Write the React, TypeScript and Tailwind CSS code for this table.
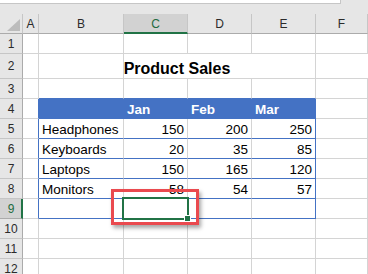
import React from "react";

type Cell = {
  text?: string;
  align?: "left" | "right";
  bold?: boolean;
  cls?: string;
};

// widths of the sheet columns (row header, A..F)
const widths = ["w-[23px]", "w-[16px]", "w-[85px]", "w-[64px]", "w-[64px]", "w-[64px]", "flex-1"];

function HeaderRow() {
  const letters = ["A", "B", "C", "D", "E", "F"];
  return (
    <div className="flex h-[20px]">
      <div className="relative w-[23px] shrink-0 border-r border-b border-r-[#c6c6c6] border-b-[#ababab] bg-[#e6e6e6]">
        {/* select-all corner */}
        <svg className="absolute right-[2px] bottom-[2px]" width="13" height="12" viewBox="0 0 13 12">
          <polygon points="13,0 13,12 0,12" fill="#bcbcbc" />
        </svg>
      </div>
      {letters.map((l, i) => {
        const selected = l === "C";
        return (
          <div
            key={l}
            className={
              widths[i + 1] +
              " flex shrink-0 items-center justify-center border-r border-b text-[12px] leading-none " +
              (selected
                ? "border-r-[#c6c6c6] border-b-[2px] border-b-[#217346] bg-[#d2d2d2] pt-[1px] text-[#1e6b41]"
                : "border-r-[#c6c6c6] border-b-[#ababab] bg-[#e6e6e6] text-[#2b2b2b]")
            }
          >
            {l}
          </div>
        );
      })}
    </div>
  );
}

function RowHead({ n, selected }: { n: number; selected?: boolean }) {
  return (
    <div
      className={
        "flex w-[23px] shrink-0 items-center justify-center border-b text-[12px] leading-none " +
        (selected
          ? "border-r-[2px] border-r-[#217346] border-b-[#ababab] bg-[#d2d2d2] pl-[1px] text-[#1e6b41]"
          : "border-r border-r-[#ababab] border-b-[#c6c6c6] bg-[#e6e6e6] text-[#2b2b2b]")
      }
    >
      {n}
    </div>
  );
}

function SheetRow({ n, cells, selected }: { n: number; cells: Cell[]; selected?: boolean }) {
  return (
    <div className="flex h-[20px]">
      <RowHead n={n} selected={selected} />
      {cells.map((c, i) => (
        <div
          key={i}
          className={
            widths[i + 1] +
            " flex shrink-0 items-end whitespace-nowrap border-r border-b border-[#d4d4d4] pb-[2px] text-[13.5px] leading-none text-black " +
            (c.align === "right" ? "justify-end pr-[3px] " : "justify-start pl-[3px] ") +
            (c.bold ? "font-bold " : "") +
            (c.cls ?? "bg-white")
          }
        >
          {c.text}
        </div>
      ))}
    </div>
  );
}

const plain: Cell[] = [{}, {}, {}, {}, {}, {}];

// table frame classes
const leftEdge = "bg-white border-r-[#4472c4]";
const hdr = "bg-[#4472c4] border-r-[#4472c4] border-b-[#4472c4] text-white";
const body = "bg-white border-b-[#4472c4]";
const bodyLast = "bg-white border-b-[#4472c4] border-r-[#4472c4]";
const topEdge = "bg-white border-b-[#4472c4]";

function dataRow(name: string, a: string, b: string, c: string): Cell[] {
  return [
    { cls: leftEdge },
    { text: name, cls: body },
    { text: a, align: "right", cls: body },
    { text: b, align: "right", cls: body },
    { text: c, align: "right", cls: bodyLast },
    {},
  ];
}

export default function App() {
  return (
    <div className="relative h-[274px] w-[368px] overflow-hidden bg-[#e6e6e6] font-['Liberation_Sans',Arial,sans-serif]">
      {/* formula bar edge */}
      <div className="flex h-[14px]">
        <div className="h-[4px] w-[341px] border-r border-b border-[#c6c6c6] bg-white" />
      </div>

      <HeaderRow />
      <SheetRow n={1} cells={plain} />

      {/* title row, centred across B:E */}
      <div className="flex h-[25px]">
        <RowHead n={2} />
        <div className="w-[16px] shrink-0 border-r border-b border-[#d4d4d4] bg-white" />
        <div className="relative flex w-[277px] shrink-0 bg-white">
          <div className="w-[85px] shrink-0 border-r border-b border-[#d4d4d4]" />
          <div className="w-[64px] shrink-0 border-b border-[#d4d4d4]" />
          <div className="w-[64px] shrink-0 border-b border-[#d4d4d4]" />
          <div className="w-[64px] shrink-0 border-r border-b border-[#d4d4d4]" />
          <div className="absolute inset-0 flex items-end justify-center pb-[2px] pr-[1px] text-[16px] font-bold leading-none text-black">
            Product Sales
          </div>
        </div>
        <div className="flex-1 border-b border-[#d4d4d4] bg-white" />
      </div>

      <SheetRow n={3} cells={[{}, { cls: topEdge }, { cls: topEdge }, { cls: topEdge }, { cls: topEdge }, {}]} />
      <SheetRow
        n={4}
        cells={[
          { cls: leftEdge },
          { cls: hdr },
          { text: "Jan", bold: true, cls: hdr },
          { text: "Feb", bold: true, cls: hdr },
          { text: "Mar", bold: true, cls: hdr },
          {},
        ]}
      />
      <SheetRow n={5} cells={dataRow("Headphones", "150", "200", "250")} />
      <SheetRow n={6} cells={dataRow("Keyboards", "20", "35", "85")} />
      <SheetRow n={7} cells={dataRow("Laptops", "150", "165", "120")} />
      <SheetRow n={8} cells={dataRow("Monitors", "58", "54", "57")} />
      <SheetRow n={9} selected cells={dataRow("", "", "", "")} />
      <SheetRow n={10} cells={plain} />
      <SheetRow n={11} cells={plain} />
      <SheetRow n={12} cells={plain} />

      {/* active cell C9 with fill handle */}
      <div className="absolute left-[122px] top-[197px] h-[23px] w-[67px] border-2 border-[#217346]" />
      <div className="absolute left-[185px] top-[216px] h-[5px] w-[5px] bg-[#217346] outline outline-1 outline-white" />

      {/* callout frame */}
      <div className="absolute left-[111px] top-[189px] h-[36px] w-[88px] border-[3px] border-[#ea4a4f] shadow-[2px_3px_4px_rgba(0,0,0,0.35)]" />
    </div>
  );
}
